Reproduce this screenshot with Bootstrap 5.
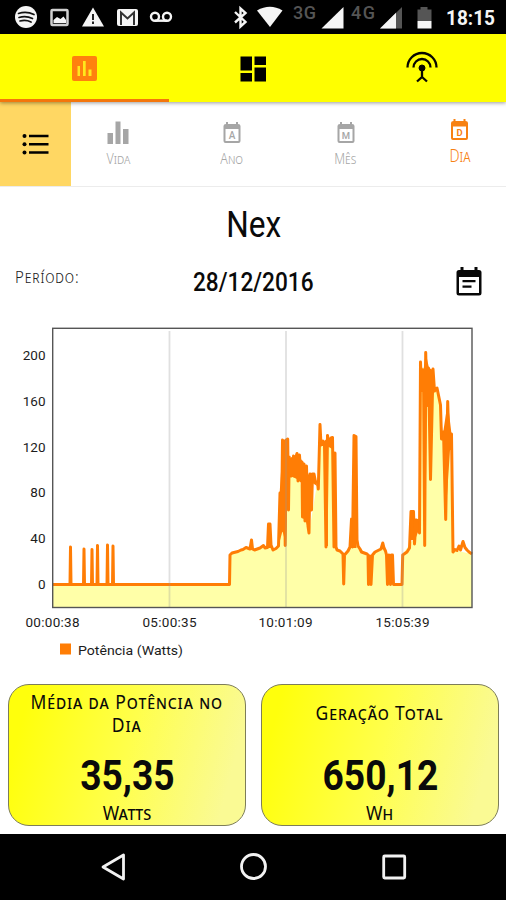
<!DOCTYPE html>
<html lang="pt-BR">
<head>
<meta charset="utf-8">
<meta name="viewport" content="width=device-width, initial-scale=1">
<title>Nex</title>
<link href="https://cdn.jsdelivr.net/npm/bootstrap@5.3.0/dist/css/bootstrap.min.css" rel="stylesheet">
<style>
body{font-family:Roboto,"Liberation Sans",sans-serif;color:#0a0a0a;background:#fff;width:506px;height:900px;overflow:hidden}
svg{display:block}
.status-bar{height:34px}
.main-tabs{height:68px;background:#ff0;box-shadow:0 1px 4px rgba(0,0,0,.4);z-index:2}
.main-tabs a{border-bottom:3px solid transparent;color:#000}
.main-tabs a.active{border-bottom-color:#f4760c}
.period-tabs{height:85px;border-bottom:1px solid #ececec}
.menu-btn{width:71px;background:#ffd763;border:0}
.caps{font-family:"Noto Sans","Open Sans",sans-serif;font-variant:small-caps;font-weight:400;line-height:1}
.caps>span,.squeeze{display:inline-block;white-space:nowrap}
.period-tabs a{width:114px;flex-shrink:0;color:#a6a6a6;font-size:15px;padding-top:19px}
.period-tabs a:first-of-type{width:94px;margin-right:9.5px}
.period-tabs a .caps{font-weight:300}
.period-tabs a .caps>span{transform:scaleX(.83)}
.period-tabs a.active{color:#f78112;font-size:17.5px;padding-top:16px}
.period-tabs a.active .caps>span{transform:scaleX(.81)}
.period-tabs .caps{margin-top:7px}
.period-tabs a.active .caps{margin-top:6px}
.title{height:74px;font-size:36.5px;line-height:76px}
.title .squeeze{transform:translateX(1px) scaleX(.865)}
.period{height:59px;padding:0 24px 0 15px}
.period .label{font-size:17px;width:101px;padding-top:7px;color:#222}
.period .label>span{transform:scaleX(.88);transform-origin:0 0;letter-spacing:1px;font-weight:300}
.period .date{font-size:26px;line-height:43px;font-weight:500}
.period .date .squeeze{transform:scaleX(.87)}
.period .pick{width:92px;padding-top:6px}
.chart{height:364px}
.cards{padding:0 7px 0 8px;gap:15px;height:142px}
.stat{border:1px solid #7d7d58;border-radius:21px;background:linear-gradient(105deg,#ffff0c 8%,#ffff4c 50%,#fafa94 90%)}
.stat .head{height:64px;font-size:19px;line-height:23px;padding-top:6px}
.stat .head>span{transform:scaleX(.92);letter-spacing:1px}
.stat .head.single{padding-top:17px}
.stat .num{font-size:42px;font-weight:700;line-height:54px}
.stat .num .squeeze{transform:scaleX(.885)}
.stat .unit{font-size:19px;line-height:22px;margin-top:-1px}
.stat .unit>span{transform:scaleX(.93)}
.nav-keys{height:67px;margin-top:8px}
</style>
<script src="https://cdn.jsdelivr.net/npm/bootstrap@5.3.0/dist/js/bootstrap.bundle.min.js"></script>
</head>
<body class="d-flex flex-column">
<header class="status-bar bg-black flex-shrink-0">
<svg width="506" height="34" fill="#f5f5f5">
  <circle cx="26" cy="17" r="11"/>
  <path d="M18.500 13.500q8-2.500 15.500 1M19 17.500q7-2 13.500 1M20 21q6-1.500 11 1" fill="none" stroke="#111" stroke-width="1.700" stroke-linecap="round"/>
  <rect x="51.500" y="10" width="16" height="15" rx="1" fill="none" stroke="#d0d0d0" stroke-width="2.500"/>
  <path d="M53.500 23v-3l3.500-3 3.500 2 3-2.500 2.500 3.500v3z"/>
  <path d="M93 7.500 104 26.500H82z"/><path d="M93 14v6M93 21.500v2.500" stroke="#222" stroke-width="2"/>
  <rect x="117" y="9" width="21" height="17" rx="2"/><path d="M121 25V12.500l6.500 6 6.500-6V25" fill="none" stroke="#333" stroke-width="2"/>
  <g fill="none" stroke="#f5f5f5" stroke-width="2.400"><circle cx="155" cy="16.700" r="4"/><circle cx="167" cy="16.700" r="4"/><path d="M155 20.700h12"/>
  <path d="M235 12l10.500 10-5 4.500V8.500l5 4.500L235 22.500" stroke-width="2.400"/></g>
  <path d="M257 10.500q13-7.500 25.500 0L270 27z"/>
  <text x="293" y="19" font-size="18" font-weight="500" fill="#555" textLength="23">3G</text>
  <path d="M321.500 28.500 343.500 7v21.500z"/>
  <text x="351" y="19" font-size="18" font-weight="500" fill="#555" textLength="24">4G</text>
  <path d="M380 28.500 402 7v21.500z" fill="#555"/><path d="M380 28.500 396 12.800v15.700z"/>
  <path d="M417.500 9.500h3V7h7v2.500h4V21h-14z" fill="#555"/><path d="M417.500 21h14v7.500h-14z"/>
  <text x="446" y="25" font-size="19.500" font-weight="700" textLength="49" lengthAdjust="spacingAndGlyphs">18:15</text>
</svg>
</header>
<nav class="main-tabs d-flex position-relative flex-shrink-0">
  <a class="active col-4 d-flex justify-content-center align-items-center" href="#" aria-label="Gráfico"><svg class="mt-1" width="25" height="25" viewBox="0 0 25 25"><rect width="25" height="25" rx="2" fill="#ff810e"/><path d="M5.500 10H8v10H5.500zM11 5h2.700v15H11zM16.500 13.500h3V20h-3z" fill="#ffe81c"/></svg></a>
  <a class="col-4 d-flex justify-content-center align-items-center" href="#" aria-label="Painel"><svg class="mt-1" width="26" height="26" viewBox="0 0 26 26"><path d="M.500.500H12v14H.500zM.500 17H12v8.500H.500zM14.500.500H26v8.500H14.500zM14.500 11.500H26v14H14.500z"/></svg></a>
  <a class="col-4 d-flex justify-content-center align-items-center" href="#" aria-label="Conexão"><svg width="32" height="32" viewBox="0 0 32 32" fill="none" stroke="#080800" stroke-width="2.300"><path d="M1.500 16.500a14.500 14.500 0 0 1 29 0M7.500 16.500a8.500 8.500 0 0 1 17 0"/><circle cx="16" cy="17" r="3" fill="#080800" stroke-width="1"/><path d="M16 18v8l-5 4.500M16 26l5 4.500"/></svg></a>
</nav>
<div class="period-tabs d-flex flex-shrink-0 text-center overflow-hidden">
  <button class="menu-btn d-flex flex-shrink-0 justify-content-center align-items-center" aria-label="Menu"><svg width="27" height="22" viewBox="0 0 27 22"><path d="M7 3h19.500M7 11.300h19.500M7 19.500h19.500" stroke="#000" stroke-width="2.400"/><circle cx="2.500" cy="3" r="2"/><circle cx="2.500" cy="11.300" r="2"/><circle cx="2.500" cy="19.500" r="2"/></svg></button>
  <a class="text-decoration-none" href="#"><svg class="mx-auto" width="22" height="23" viewBox="0 0 22 23" fill="currentColor"><path d="M.500 12h5.500v11H.500zM8.500.500h5V23h-5zM16 8h5.500v15H16z"/></svg><div class="caps"><span>Vida</span></div></a>
  <a class="text-decoration-none" href="#"><svg class="mx-auto" width="18" height="23" viewBox="0 0 18 23" fill="currentColor"><path d="M3 1h2v2h8V1h2v2q2.500 0 2.500 2v15q0 2-2 2h-13q-2 0-2-2V5Q.500 3 3 3zM2.500 8v12h13V8z" fill-rule="evenodd"/><text x="9" y="18" text-anchor="middle" font-size="10" font-weight="500">A</text></svg><div class="caps"><span>Ano</span></div></a>
  <a class="text-decoration-none" href="#"><svg class="mx-auto" width="18" height="23" viewBox="0 0 18 23" fill="currentColor"><path d="M3 1h2v2h8V1h2v2q2.500 0 2.500 2v15q0 2-2 2h-13q-2 0-2-2V5Q.500 3 3 3zM2.500 8v12h13V8z" fill-rule="evenodd"/><text x="9" y="17.500" text-anchor="middle" font-size="9.500" font-weight="500">M</text></svg><div class="caps"><span>Mês</span></div></a>
  <a class="active text-decoration-none" href="#"><svg class="mx-auto" width="19" height="23" viewBox="0 0 18 23" fill="currentColor"><path d="M3 1h2v2h8V1h2v2q2.500 0 2.500 2v15q0 2-2 2h-13q-2 0-2-2V5Q.500 3 3 3zM2.500 8.500v11.500h13V8.500z" fill-rule="evenodd"/><text x="9" y="17.800" text-anchor="middle" font-size="9.500" font-weight="700">D</text></svg><div class="caps"><span>Dia</span></div></a>
</div>
<h1 class="title text-center fw-normal m-0 flex-shrink-0"><span class="squeeze">Nex</span></h1>
<div class="period d-flex justify-content-between flex-shrink-0">
  <div class="label caps"><span>Período:</span></div>
  <div class="date"><span class="squeeze">28/12/2016</span></div>
  <div class="pick d-flex justify-content-end"><svg width="26" height="29" viewBox="0 0 26 29" fill="#080808"><path d="M4.500 0h3v3h11V0h3v3H23q2.500 0 2.500 2.500V26q0 2.500-2.500 2.500H3Q.500 28.500.500 26V5.500Q.500 3 3 3h1.500zM3 10v16h20V10z" fill-rule="evenodd"/><path d="M6.500 13h13v2.300h-13zM6.500 18.500h9v2.300h-9z"/></svg></div>
</div>
<svg class="chart flex-shrink-0" width="506" height="364" viewBox="0 320 506 364" font-size="13.500" fill="#1c1c1c">
  <defs>
    <path id="power" d="M53 584.500H70L70.500 547 71 584.500H83.500L84 549 84.500 584.500H91.500L92 549.500 92.500 584.500H97L97.500 545.500 98 584.500H107L107.500 545 108 584.500H112.500L113 546 113.500 584.500H229.500L230 555 232 553 238 551.500 241 550 243 549.500 246 547.500 250 549 251.500 540 252.500 549 254.500 550 260 548 263.500 545.500 265 548 267.500 547.500 268.500 524 270 524 271 545 273 550 276 548.500 278.500 546 280 493 281.500 530 282.500 440 283.500 531 284.500 441 285.200 545.500 286.200 440 287.700 439 288.500 510 289.200 457 291 476 292.500 474 293.500 456 295 475 296 457 297 453.500 298 481 299.500 455 301 481 302 462 302.500 517 304 464 305 521 306.500 466 308 526 309 533 310 474 311.500 510 312.500 474 314 474 315.500 482 317.500 482 318.300 489 320 424.500 321 445 323 441 324.500 446 326 547 327.500 435.500 329 445 331 438 332.500 437.500 334 547 335 453 336 547 337 550 340 551 343 554 343.700 584 344.500 555 348 551 350 547 351.500 519 352.500 547 354 435.500 356 436.500 357 540 358 546 360 549 361.500 552 367 554 368 555 368.500 584.500 370 556 371 584.500 372.500 555 375 552 381 549 382.800 543 384 548 385.500 551 386.500 555 387.500 584.500 389 555 390.500 584.500 391.500 555 392.500 555 393.500 584.500H402L402.700 555 407 552 409.500 548 411 511.500 413.500 511.500 414.500 544 416 520 418.500 521 419.500 533 420.500 362 421.500 390 423.500 370 424.700 545.500 425.700 352.500 427 405 428.500 368 430.500 479.500 433 369 434.500 391 437 388 440.500 405 441.500 439 443.500 432 445.700 519.500 447.700 401.500 449 449 451.500 434 453 552 455 549.500 457 550.500 459 546 460.500 550 463 541.500 465 547.500 467 550 469 552 472 554"/>
    <path id="dense" d="M268 525H271V548H267zM279.500 495 283 441H288.500L288 478 286 545 282.500 531 278.500 546zM290 458 297.500 454 303 462 306 473 311 476 309 532 306 522 302.500 517 301.500 481 290 476zM311 474H314L317 486 311 482zM320 445 327.500 438 334 439V450L327 446H320zM326.500 440H328V546H326.500zM353.500 436H356.500V548H352zM368 555H372V584H368zM387 555H391.500V584H387zM411 512H413.500L414 540H410zM414 521H418.500V531L414 542zM420 364 423.500 370 425.700 353 429 368 433 370 434 390 431 406 427 407 425 545 423 392H420zM441 405 442.500 437 447.700 402 451.500 434 450 450 445.500 518 444 440 441 436z"/>
  </defs>
  <path d="M53 584H229.500V554L246 548 278 548 286 440 292 475 300 480 309 533 317 484 321 445 333 440 336 548 343 554V584L344 554 353 545 354 436 358 546 368 555V584H372V555L382 546 387 555V584H392V555L394 584H402V555L420 530 420.500 367 430 370 441 407 446 518 449 430 453 550 472 554V607H53z" fill="#ffffa8"/>
  <use href="#power" fill="none" stroke="#ff7d05" stroke-width="3" stroke-linejoin="round"/>
  <use href="#dense" fill="#ff7d05"/>
  <path d="M169.500 331V607M286 331V607M402.500 331V607" stroke="#999" stroke-opacity=".3" stroke-width="1.800"/>
  <rect x="52.700" y="328.300" width="419.300" height="279.200" fill="none" stroke="#555" stroke-width="1.400"/>
  <g text-anchor="end"><text x="45.500" y="360">200</text><text x="45.500" y="405.500">160</text><text x="45.500" y="451.500">120</text><text x="45.500" y="497">80</text><text x="45.500" y="543">40</text><text x="45.500" y="588.500">0</text></g>
  <g><text x="25.500" y="626.500" textLength="54">00:00:38</text><text x="142.500" y="626.500" textLength="54">05:00:35</text><text x="258.500" y="626.500" textLength="54">10:01:09</text><text x="375.500" y="626.500" textLength="54">15:05:39</text></g>
  <rect x="60" y="643.500" width="11" height="11" fill="#ff7d05"/><text x="78" y="654.500" textLength="105" lengthAdjust="spacingAndGlyphs">Potência (Watts)</text>
</svg>
<div class="cards d-flex flex-shrink-0 text-center">
  <div class="stat flex-fill w-50"><div class="head caps"><span>Média da Potência no<br>Dia</span></div><div class="num"><span class="squeeze">35,35</span></div><div class="unit caps"><span>Watts</span></div></div>
  <div class="stat flex-fill w-50"><div class="head single caps"><span>Geração Total</span></div><div class="num"><span class="squeeze">650,12</span></div><div class="unit caps"><span>Wh</span></div></div>
</div>
<footer class="nav-keys bg-black flex-shrink-0"><svg width="506" height="67" fill="none" stroke="#f2f2f2" stroke-width="2.800"><path d="M123.500 21v24L103 33z" stroke-linejoin="round"/><circle cx="253.500" cy="32.500" r="12"/><rect x="383.700" y="22" width="21" height="22" rx="1"/></svg></footer>
</body>
</html>
